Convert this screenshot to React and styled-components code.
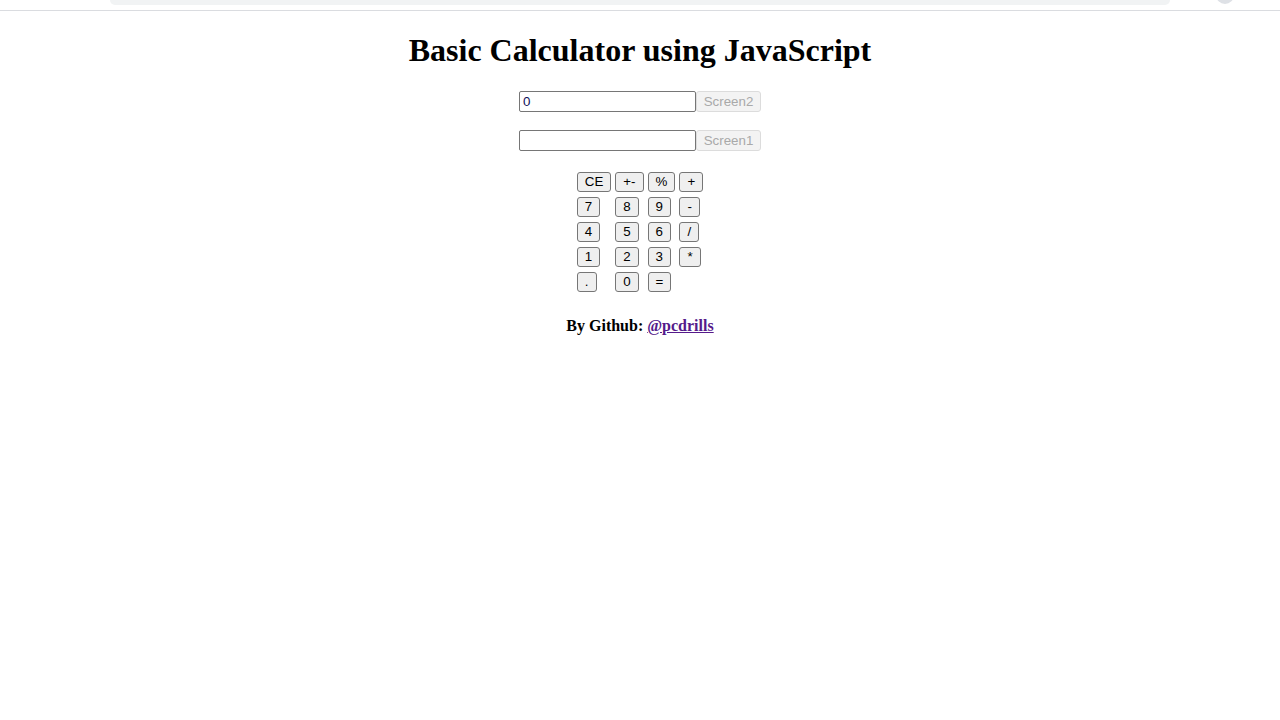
import React, { useState } from "react";
import styled, { createGlobalStyle } from "styled-components";

const GlobalStyle = createGlobalStyle`
  html, body {
    margin: 0;
    padding: 0;
    background: #fff;
  }
  body {
    font-family: "Liberation Serif", "Times New Roman", serif;
    color: #000;
  }
`;

const keys = [
  ["CE", "+-", "%", "+"],
  ["7", "8", "9", "-"],
  ["4", "5", "6", "/"],
  ["1", "2", "3", "*"],
  [".", "0", "="],
];

function App() {
  const [screen2, setScreen2] = useState("0");
  const [screen1, setScreen1] = useState("");

  return (
    <>
      <GlobalStyle />
      <BrowserStrip>
        <AddressBar />
        <ProfileDot />
      </BrowserStrip>
      <Page>
        <Title>Basic Calculator using JavaScript</Title>
        <ScreenRow>
          <ScreenInput
            type="text"
            value={screen2}
            onChange={(e) => setScreen2(e.target.value)}
          />
          <ScreenLabel disabled>Screen2</ScreenLabel>
        </ScreenRow>
        <ScreenRow $top={18}>
          <ScreenInput
            type="text"
            value={screen1}
            onChange={(e) => setScreen1(e.target.value)}
          />
          <ScreenLabel disabled>Screen1</ScreenLabel>
        </ScreenRow>
        <Keypad>
          {keys.map((row, r) =>
            row.map((k) => <Key key={r + k}>{k}</Key>)
          )}
        </Keypad>
        <Credit>
          By Github: <a href="#">@pcdrills</a>
        </Credit>
      </Page>
    </>
  );
}

export default App;

const BrowserStrip = styled.div`
  height: 10px;
  border-bottom: 1px solid #dadce0;
  display: flex;
  align-items: flex-start;
  padding-left: 110px;
  overflow: hidden;
`;

const AddressBar = styled.div`
  width: 1060px;
  height: 5px;
  background: #f1f3f4;
  border-radius: 0 0 8px 8px;
`;

const ProfileDot = styled.div`
  width: 18px;
  height: 18px;
  margin: -14px 0 0 46px;
  border-radius: 50%;
  background: #dee1e6;
`;

const Page = styled.div`
  display: flex;
  flex-direction: column;
  align-items: center;
`;

const Title = styled.h1`
  margin: 21px 0 0;
  font-size: 32px;
  line-height: 36px;
  font-weight: bold;
`;

const ScreenRow = styled.div`
  display: flex;
  margin-top: ${(p) => p.$top ?? 23}px;
`;

const ScreenInput = styled.input`
  box-sizing: border-box;
  width: 177px;
  height: 21px;
  margin: 0;
  padding: 1px 3px;
  border: 1px solid #767676;
  border-radius: 2px;
  font-family: "Liberation Sans", Arial, sans-serif;
  font-size: 13.333px;
  color: #10105a;
  outline: none;
`;

const ScreenLabel = styled.button`
  box-sizing: border-box;
  width: 65px;
  height: 21px;
  margin: 0;
  padding: 1px 6px;
  border: 1px solid #dcdcdc;
  border-radius: 3px;
  background: #f3f3f3;
  color: #a9a9a9;
  font-family: "Liberation Sans", Arial, sans-serif;
  font-size: 13.333px;
`;

const Keypad = styled.div`
  display: grid;
  grid-template-columns: repeat(4, auto);
  column-gap: 4px;
  row-gap: 5px;
  justify-items: start;
  margin-top: 21px;
`;

const Key = styled.button`
  box-sizing: border-box;
  height: 20px;
  margin: 0;
  padding: 1px 7px;
  border: 1px solid #767676;
  border-radius: 3px;
  background: #efefef;
  color: #000;
  font-family: "Liberation Sans", Arial, sans-serif;
  font-size: 13.333px;
  line-height: 16px;
  cursor: pointer;
`;

const Credit = styled.h4`
  margin: 25px 0 0;
  font-size: 16px;
  line-height: 18px;
  font-weight: bold;

  a {
    color: #551a8b;
    text-decoration: underline;
  }
`;
